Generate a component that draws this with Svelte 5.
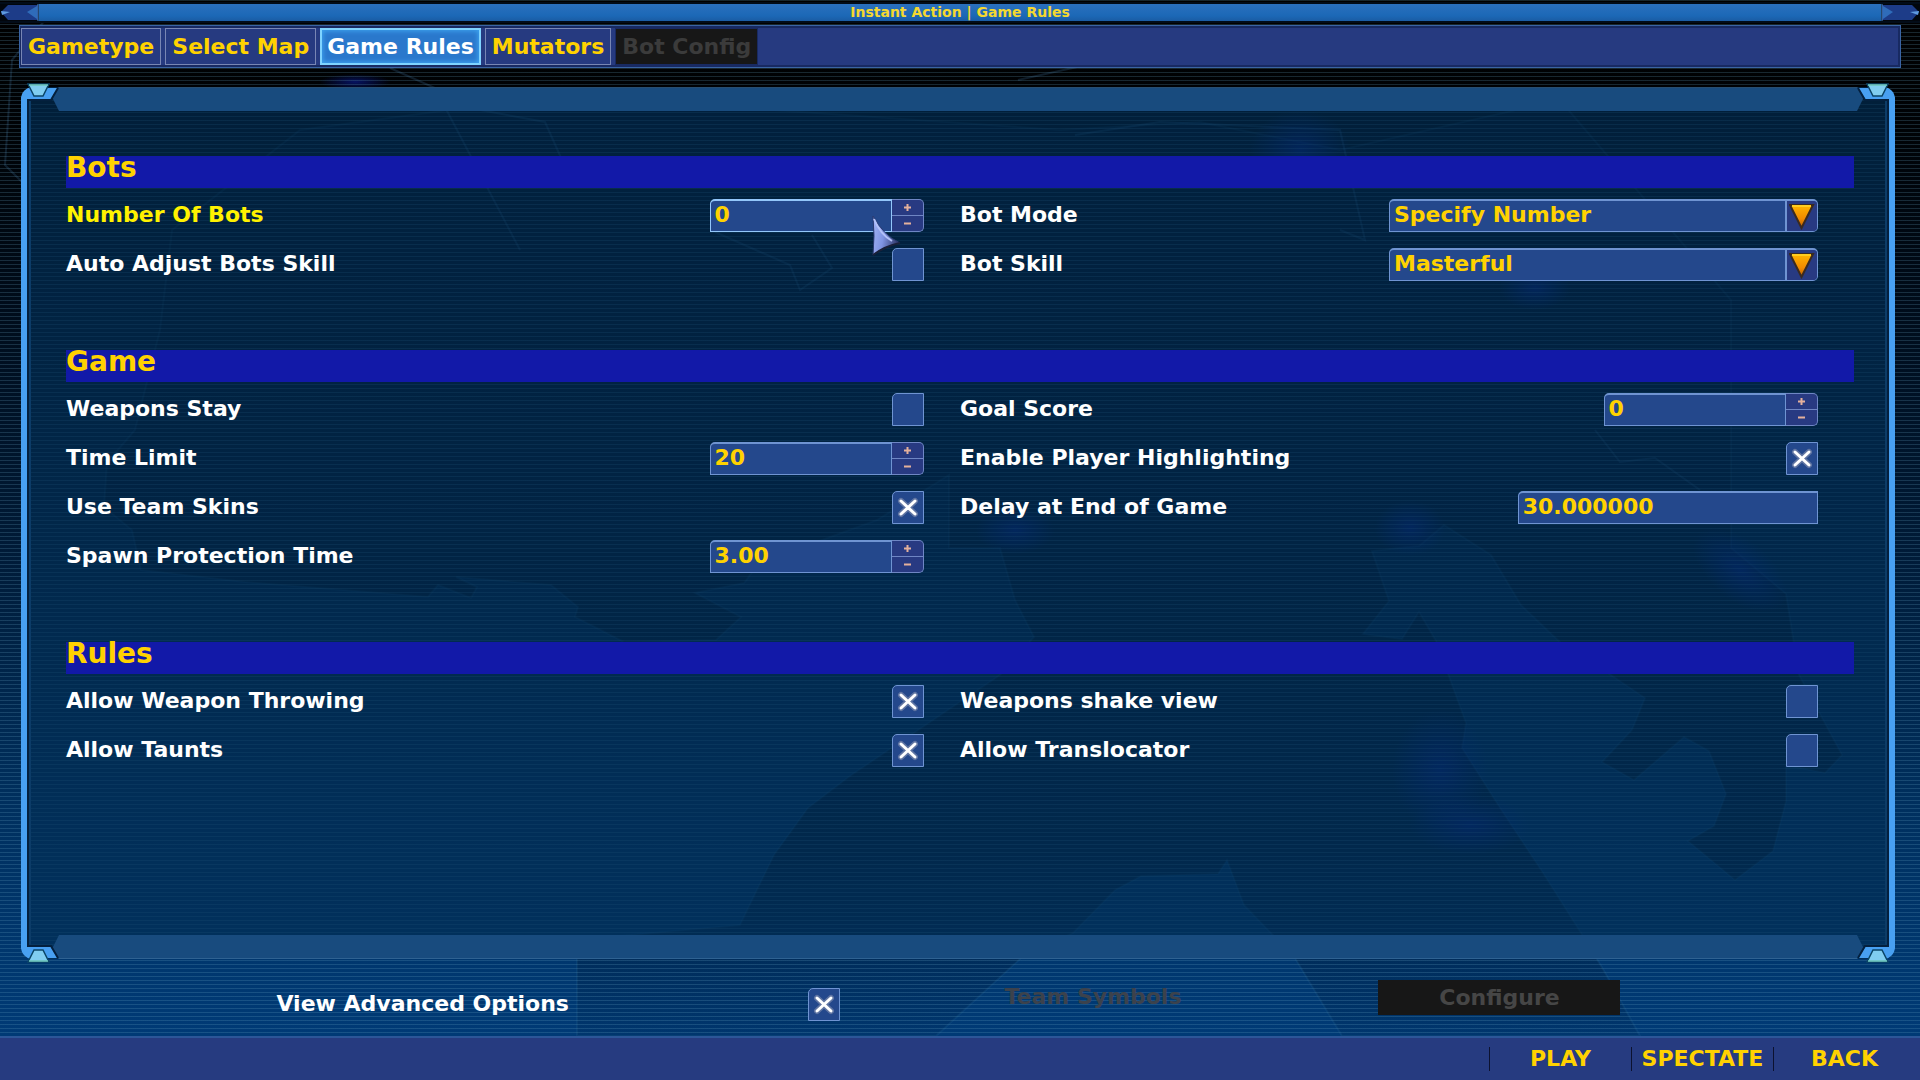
<script>
  let tabs = [
    { label: 'Gametype' },
    { label: 'Select Map' },
    { label: 'Game Rules' },
    { label: 'Mutators' },
    { label: 'Bot Config', disabled: true }
  ];
  let activeTab = $state('Game Rules');

  let sections = $state([
    {
      title: 'Bots',
      rows: [
        { id: 'num-bots', label: 'Number Of Bots', type: 'spin', value: '0', step: 1, focused: true },
        { id: 'bot-mode', label: 'Bot Mode', type: 'combo', value: 'Specify Number' },
        { id: 'auto-adjust', label: 'Auto Adjust Bots Skill', type: 'check', value: false },
        { id: 'bot-skill', label: 'Bot Skill', type: 'combo', value: 'Masterful' }
      ]
    },
    {
      title: 'Game',
      rows: [
        { id: 'weapons-stay', label: 'Weapons Stay', type: 'check', value: false },
        { id: 'goal-score', label: 'Goal Score', type: 'spin', value: '0', step: 1 },
        { id: 'time-limit', label: 'Time Limit', type: 'spin', value: '20', step: 1 },
        { id: 'highlighting', label: 'Enable Player Highlighting', type: 'check', value: true },
        { id: 'team-skins', label: 'Use Team Skins', type: 'check', value: true },
        { id: 'end-delay', label: 'Delay at End of Game', type: 'edit', value: '30.000000' },
        { id: 'spawn-time', label: 'Spawn Protection Time', type: 'spin', value: '3.00', step: 0.05 }
      ]
    },
    {
      title: 'Rules',
      rows: [
        { id: 'throwing', label: 'Allow Weapon Throwing', type: 'check', value: true },
        { id: 'shake', label: 'Weapons shake view', type: 'check', value: false },
        { id: 'taunts', label: 'Allow Taunts', type: 'check', value: true },
        { id: 'translocator', label: 'Allow Translocator', type: 'check', value: false }
      ]
    }
  ]);

  let advanced = $state(true);

  function bump(row, dir) {
    const next = Math.max(0, Number(row.value) + dir * row.step);
    row.value = row.step < 1 ? next.toFixed(2) : String(next);
  }
</script>

{#snippet cross()}
  <svg class="cross" viewBox="0 0 32 33" aria-hidden="true">
    <path d="M9 10 L23 23 M23 10 L9 23" stroke="#9aa0b8" stroke-opacity="0.5" stroke-width="6" stroke-linecap="round" />
    <path d="M9 10 L23 23 M23 10 L9 23" stroke="#fff" stroke-width="3" stroke-linecap="round" />
  </svg>
{/snippet}

{#snippet corner(pos)}
  <svg class="corner {pos}" viewBox="0 0 44 40" aria-hidden="true">
    <path d="M2 40 V15 L9 5 H39 L32 16 H8 V40 Z" fill="#48a0f2" />
    <path d="M39 5 L32 17 H9 V40" fill="none" stroke="#04203e" stroke-width="2" />
    <path d="M9 1 H30 L24 13 H15 Z" fill="#80cdf0" stroke="#0b4668" stroke-width="1.5" />
    <path d="M10 2 H29" stroke="#6cc4b8" stroke-width="1.5" />
  </svg>
{/snippet}

{#snippet cap(side)}
  <svg class="cap {side}" viewBox="0 0 39 17" aria-hidden="true">
    <path d="M1 8 L8 1 H38 V16 H8 Z" fill="#1d3c88" />
    <path d="M1 7 L10 8 L2 11 Z" fill="#5f9be0" />
    <path d="M27 8 L37 2 V15 Z" fill="#2f6cba" />
    <path d="M38 0 V17" stroke="#4a88cc" />
  </svg>
{/snippet}

<div class="screen">
  <svg class="backdrop" viewBox="0 0 1920 1080" preserveAspectRatio="none" aria-hidden="true">
    <defs>
      <radialGradient id="haze">
        <stop offset="0" stop-color="#0a1ea0" stop-opacity="0.6" />
        <stop offset="1" stop-color="#0a1ea0" stop-opacity="0" />
      </radialGradient>
      <linearGradient id="shade" x1="0" y1="0" x2="0" y2="1">
        <stop offset="0" stop-color="#000814" stop-opacity="0.6" />
        <stop offset="0.8" stop-color="#000814" stop-opacity="0.5" />
        <stop offset="0.92" stop-color="#000814" stop-opacity="0.2" />
        <stop offset="1" stop-color="#000814" stop-opacity="0.08" />
      </linearGradient>
    </defs>
    <path
      class="figure"
      d="M160 330 L172 230 L300 130 L560 95 L1060 130 L1200 122 L1340 150 L1560 100 L1731 300
        V548 L1786 594 L1799 675 L1842 755 L1825 773 L1786 765 V801 L1773 851 L1735 880 L1688 841
        L1714 826 L1726 794 L1709 751 L1684 737 L1634 780 L1602 762 L1632 730 L1645 698 L1611 675
        L1564 646 L1521 605 L1491 555 L1444 525 L1419 546 L1372 551 L1389 601 L1363 634 L1402 639
        L1419 612 L1436 641 L1466 723 L1462 748 L1500 808 L1543 873 L1581 933 L1603 969 L1640 1036
        H1342 L1295 958 L1244 905 L1227 860 L1218 874 L1141 876 L1115 890 L1073 933 L1021 958
        L936 1036 H577 V940 L740 925 L774 855 L808 808 L850 776 L945 712 L1000 675 L1034 637
        L1015 600 L1000 548 H949 V475 L877 520 L759 563 L744 583 L695 593 L741 617 L716 640
        L624 642 L575 617 L578 607 L551 585 L456 577 L477 587 L471 598 L438 585 L428 597
        L245 582 L141 570 L132 530 L104 507 L107 463 L135 430 Z"
    />
    <path class="trace" d="M45 20 L12 60 L5 165 L22 182 M390 68 L435 88 L520 250 M480 110 L545 122 L562 160
      M715 232 L790 265 L800 290 L832 268 L812 235 M1075 135 L1160 122 L1340 130 L1365 240 L1340 230
      M1018 80 L1100 62 M1595 430 L1620 462 L1655 458 L1700 490" />
    <ellipse cx="1300" cy="150" rx="50" ry="40" fill="url(#haze)" />
    <ellipse cx="1015" cy="530" rx="40" ry="24" fill="url(#haze)" />
    <ellipse cx="1410" cy="528" rx="36" ry="28" fill="url(#haze)" />
    <ellipse cx="1535" cy="288" rx="36" ry="22" fill="url(#haze)" />
    <ellipse cx="1740" cy="570" rx="56" ry="30" fill="url(#haze)" transform="rotate(40 1740 570)" />
    <ellipse cx="1440" cy="770" rx="48" ry="60" fill="url(#haze)" />
    <ellipse cx="1470" cy="825" rx="60" ry="30" fill="url(#haze)" />
    <ellipse cx="355" cy="82" rx="36" ry="8" fill="url(#haze)" />
  </svg>

  <header class="titlebar">
    {@render cap('left')}
    <h1>Instant Action | Game Rules</h1>
    {@render cap('right')}
  </header>

  <nav class="tabs">
    {#each tabs as tab}
      <button
        class="tab"
        class:active={tab.label === activeTab}
        disabled={tab.disabled}
        onclick={() => (activeTab = tab.label)}>{tab.label}</button>
    {/each}
  </nav>

  <main class="panel">
    <div class="band top"></div>
    <div class="body">
      {#each sections as section}
        <section>
          <h2>{section.title}</h2>
          <div class="rows">
            {#each section.rows as row}
              <div class="row">
                <label for={row.id} class:focused={row.focused}>{row.label}</label>
                {#if row.type === 'check'}
                  <span class="check">
                    <input id={row.id} type="checkbox" bind:checked={row.value} />
                    {#if row.value}{@render cross()}{/if}
                  </span>
                {:else if row.type === 'spin'}
                  <span class="spin" class:focused={row.focused}>
                    <input id={row.id} class="field" type="text" inputmode="decimal" bind:value={row.value} />
                    <span class="steps">
                      <button aria-label="Increase {row.label}" onclick={() => bump(row, 1)}>
                        <svg viewBox="0 0 9 9"><path d="M4.5 1 V8 M1 4.5 H8" /></svg>
                      </button>
                      <button aria-label="Decrease {row.label}" onclick={() => bump(row, -1)}>
                        <svg viewBox="0 0 9 9"><path d="M1 4.5 H8" /></svg>
                      </button>
                    </span>
                    {#if row.focused}
                      <svg class="pointer" viewBox="0 0 30 40" aria-hidden="true">
                        <defs>
                          <linearGradient id="steel" x1="0" y1="0" x2="1" y2="0.3">
                            <stop offset="0" stop-color="#a4b6f6" />
                            <stop offset="0.5" stop-color="#7f93e2" />
                            <stop offset="1" stop-color="#333c70" />
                          </linearGradient>
                        </defs>
                        <path d="M1 0 Q11 19 28 27 Q13 30 1 39 Q3 20 1 0 Z" fill="url(#steel)" stroke="#2a3a70" />
                        <path d="M2 3 Q8 18 20 25" fill="none" stroke="#b4c2f8" stroke-width="2" />
                        <path d="M28 27 Q13 30 1 39" fill="none" stroke="#1a2038" stroke-width="2" />
                      </svg>
                    {/if}
                  </span>
                {:else if row.type === 'combo'}
                  <span class="combo">
                    <select id={row.id} class="field" bind:value={row.value}>
                      <option>{row.value}</option>
                    </select>
                    <span class="drop">
                      <svg viewBox="0 0 26 28" aria-hidden="true">
                        <defs>
                          <linearGradient id="amber-{row.id}" x1="0" y1="0" x2="0" y2="1">
                            <stop offset="0" stop-color="#ffb400" />
                            <stop offset="0.6" stop-color="#f08a00" />
                            <stop offset="1" stop-color="#b85c00" />
                          </linearGradient>
                        </defs>
                        <path d="M1 3 H24 L12.5 26 Z" fill="url(#amber-{row.id})" stroke="#3a2a20" stroke-width="2" />
                        <path d="M3 4 H22" stroke="#ffcc20" stroke-width="2" />
                      </svg>
                    </span>
                  </span>
                {:else}
                  <input id={row.id} class="field edit" type="text" bind:value={row.value} />
                {/if}
              </div>
            {/each}
          </div>
        </section>
      {/each}
    </div>
    <div class="band bottom"></div>
    {@render corner('tl')}
    {@render corner('tr')}
    {@render corner('bl')}
    {@render corner('br')}
  </main>

  <div class="options">
    <div class="option advanced">
      <label for="advanced">View Advanced Options</label>
      <span class="check">
        <input id="advanced" type="checkbox" bind:checked={advanced} />
        {#if advanced}{@render cross()}{/if}
      </span>
    </div>
    <div class="option symbols">
      <label for="configure">Team Symbols</label>
      <button id="configure" disabled>Configure</button>
    </div>
  </div>

  <footer class="footer">
    <button>PLAY</button>
    <button>SPECTATE</button>
    <button>BACK</button>
  </footer>
</div>

<style>
  :global(body) {
    background: #000;
  }

  .screen {
    position: relative;
    isolation: isolate;
    display: flex;
    flex-direction: column;
    min-height: 100vh;
    box-sizing: border-box;
    padding-top: 4px;
    font-family: 'DejaVu Sans', Verdana, sans-serif;
    font-weight: bold;
    font-size: 22px;
    line-height: 26px;
    color: #fff;
    background: linear-gradient(#000 0, #000306 12%, #000a16 25%, #001a36 50%, #00305f 75%, #003c7a 100%);
  }

  /* scanlines over the backdrop art */
  .screen::before {
    content: '';
    position: absolute;
    inset: 0;
    z-index: -1;
    background: repeating-linear-gradient(rgba(100, 160, 190, 0.24) 0 1px, transparent 1px 4px);
  }

  .backdrop {
    position: absolute;
    inset: 0;
    width: 100%;
    height: 100%;
    z-index: -2;
  }

  .figure {
    fill: url(#shade);
    stroke: #3a80b0;
    stroke-opacity: 0.12;
    stroke-width: 2;
  }

  .trace {
    fill: none;
    stroke: #2a5070;
    stroke-opacity: 0.35;
    stroke-width: 2;
  }

  button,
  input,
  select {
    font: inherit;
    color: #ffd200;
    margin: 0;
    box-sizing: border-box;
    outline: none;
  }

  /* Title bar */
  .titlebar {
    display: flex;
    justify-content: space-between;
    align-items: center;
    height: 17px;
    background: linear-gradient(#2a70be, #1c68b6 70%, #1a5ca4);
    outline: 2px solid #020c18;
  }

  .titlebar h1 {
    margin: 0;
    font-size: 14px;
    line-height: 14px;
    padding-bottom: 2px;
    color: #f4d830;
  }

  .cap {
    width: 39px;
    height: 17px;
    background: #01060c;
  }

  .cap.right {
    transform: scaleX(-1);
  }

  /* Tabs */
  .tabs {
    display: flex;
    gap: 4px;
    margin: 4px 19px 0;
    padding: 2px 1px;
    border: 1px solid #3a64a4;
    background: #263a80;
    box-shadow: inset 0 0 0 2px #182a62;
  }

  .tab {
    height: 37px;
    padding: 0 6px;
    border: 1px solid #7886b4;
    background: #263a80;
  }

  .tab.active {
    color: #fff;
    padding: 0 5px;
    border: 2px solid #7fd4ff;
    background: #2a78cc;
    box-shadow: inset 0 0 5px 1px #3ea4f0;
  }

  .tab:disabled {
    color: #3b3b3b;
    border-color: #182a62;
    background: #171717;
  }

  /* Panel */
  .panel {
    position: relative;
    flex: 1;
    display: flex;
    flex-direction: column;
    margin: 19px 25px 0 21px;
    border: solid #48a0f2;
    border-width: 0 6px;
    border-radius: 12px;
    background: rgba(1, 46, 84, 0.68);
    box-shadow: inset 2px 0 #04203e, inset -2px 0 #04203e, inset 4px 0 #0c3c68, inset -4px 0 #0c3c68;
  }

  .band {
    height: 24px;
    margin: 0 25px;
    box-sizing: border-box;
    background: #184b7e;
  }

  .band.top {
    border-top: 1px solid #284e70;
    clip-path: polygon(7px 0, calc(100% - 7px) 0, 100% 10px, calc(100% - 7px) 100%, 7px 100%, 0 10px);
  }

  .band.bottom {
    border-bottom: 1px solid #2f6292;
    clip-path: polygon(7px 0, calc(100% - 7px) 0, 100% 14px, calc(100% - 7px) 100%, 7px 100%, 0 14px);
  }

  .corner {
    position: absolute;
    width: 44px;
    height: 40px;
  }

  .tl { left: -8px; top: -4px; }
  .tr { right: -8px; top: -4px; transform: scaleX(-1); }
  .bl { left: -8px; bottom: -4px; transform: scaleY(-1); }
  .br { right: -8px; bottom: -4px; transform: scale(-1); }

  .body {
    flex: 1;
    display: flex;
    flex-direction: column;
    gap: 69px;
    padding: 45px 35px 44px 39px;
  }

  h2 {
    margin: 0 0 11px;
    height: 32px;
    font-size: 28px;
    line-height: 24px;
    color: #ffd200;
    background: #1219a8;
  }

  .rows {
    display: grid;
    grid-template-columns: 1fr 1fr;
    gap: 16px 36px;
    margin-right: 36px;
  }

  .row,
  .option {
    display: flex;
    justify-content: space-between;
    align-items: center;
  }

  .row label,
  .option label {
    padding-bottom: 1px;
  }

  label.focused {
    color: #fff200;
  }

  /* Controls */
  .field {
    height: 33px;
    min-width: 0;
    padding: 0 4px 3px;
    border: 1px solid #6f94d2;
    border-top-width: 2px;
    border-radius: 5px 0 0 0;
    background: #24488c;
  }

  .edit {
    width: 35%;
  }

  .check {
    position: relative;
    display: flex;
    width: 32px;
    height: 33px;
  }

  .check input {
    appearance: none;
    width: 32px;
    height: 33px;
    border: 1px solid #6f94d2;
    border-radius: 5px 0 0 0;
    background: #24488c;
  }

  .cross {
    position: absolute;
    inset: 0;
    fill: none;
    pointer-events: none;
  }

  .spin {
    position: relative;
    display: flex;
    width: 25%;
  }

  .spin .field {
    flex: 1;
  }

  .spin.focused .field {
    border-color: #93c6fa;
  }

  .steps {
    display: flex;
    flex-direction: column;
    width: 32px;
  }

  .steps button {
    flex: 1;
    display: flex;
    align-items: center;
    justify-content: center;
    padding: 0;
    border: 1px solid #6f86c4;
    border-left-width: 0;
    border-radius: 0 5px 0 0;
    background: #283a82;
  }

  .steps button + button {
    border-top-width: 0;
    border-radius: 0 0 5px 0;
  }

  .steps svg {
    width: 9px;
    height: 9px;
    fill: none;
    stroke: #e4b09c;
    stroke-width: 2;
  }

  .pointer {
    position: absolute;
    right: 22px;
    top: 17px;
    width: 30px;
    height: 40px;
    pointer-events: none;
  }

  .combo {
    position: relative;
    display: flex;
    width: 50%;
  }

  .combo .field {
    appearance: none;
    flex: 1;
    border-radius: 5px 5px 5px 0;
  }

  .drop {
    position: absolute;
    right: 1px;
    top: 2px;
    bottom: 1px;
    width: 30px;
    display: flex;
    align-items: center;
    justify-content: center;
    border-left: 2px solid #6f94d2;
    border-radius: 0 4px 4px 0;
    background: #283a82;
    pointer-events: none;
  }

  .drop svg {
    flex: none;
    width: 26px;
    height: 28px;
  }

  /* Options below the panel */
  .options {
    display: grid;
    grid-template-columns: 564fr 616fr;
    column-gap: 12.2%;
    align-items: start;
    padding: 21px 15.6% 15px 14.4%;
  }

  .advanced {
    padding-top: 8px;
  }

  .symbols label {
    color: #3c424c;
  }

  .symbols button {
    width: 242px;
    height: 35px;
    padding: 0;
    border: 0;
    color: #464646;
    background: #171717;
  }

  /* Footer */
  .footer {
    display: flex;
    justify-content: flex-end;
    align-items: center;
    height: 42px;
    padding-right: 5px;
    border-top: 2px solid #2c5698;
    background: #263b80;
  }

  .footer button {
    width: 142px;
    height: 24px;
    padding: 0;
    line-height: 22px;
    border: 0;
    border-left: 1px solid #0c1230;
    background: none;
  }
</style>
